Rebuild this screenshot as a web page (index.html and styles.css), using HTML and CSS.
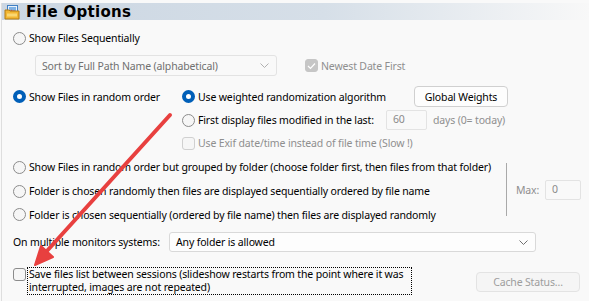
FILE: index.html
```html
<!DOCTYPE html>
<html>
<head>
<meta charset="utf-8">
<link rel="stylesheet" href="styles.css">
</head>
<body>
<div class="page">
  <div class="title">
    <svg class="ticon" width="16" height="16" viewBox="0 0 16 16">
      <rect x="3.5" y="1.5" width="10" height="8" fill="#e9f2fb" stroke="#3f7fc4"/>
      <rect x="5" y="3" width="7" height="5" fill="#7fb2e5"/>
      <path d="M5 8 L7.5 5.5 L9 7 L10 6 L12 8 Z" fill="#d05050"/>
      <path d="M1 6 H5 L6 7 H15 V15 H1 Z" fill="#f2b632" stroke="#b07a14" stroke-width="1"/>
      <rect x="3" y="9.5" width="10" height="3" fill="#f9d772"/>
    </svg>
    <span class="ttext">File Options</span>
  </div>

  <div class="row r-seq">
    <span class="radio"></span><span class="lbl">Show Files Sequentially</span>
  </div>

  <div class="row r-sort">
    <div class="select dis"><span>Sort by Full Path Name (alphabetical)</span><svg class="chev" width="9" height="5" viewBox="0 0 9 5"><path d="M0.5 0.5 L4.5 4.5 L8.5 0.5" fill="none" stroke="#b0b0b0"/></svg></div>
    <div class="newest"><span class="check dchk"><svg width="9" height="8" viewBox="0 0 9 8"><path d="M1 4 L3.5 6.5 L8 1.5" fill="none" stroke="#fff" stroke-width="1.2"/></svg></span><span class="lbl grey">Newest Date First</span></div>
  </div>

  <div class="random">
    <div class="rleft">
      <span class="radio on"></span><span class="lbl">Show Files in random order</span>
    </div>
    <div class="rright">
      <div class="sub s1">
        <span class="radio on"></span><span class="lbl w1">Use weighted randomization algorithm</span>
        <span class="btn gw">Global Weights</span>
      </div>
      <div class="sub s2">
        <span class="radio"></span><span class="lbl w2">First display files modified in the last:</span>
        <span class="input days">60</span><span class="lbl grey dtext">days (0= today)</span>
      </div>
      <div class="sub s3">
        <span class="check dis"></span><span class="lbl grey">Use Exif date/time instead of file time (Slow !)</span>
      </div>
    </div>
  </div>

  <div class="grouped">
    <div class="glist">
      <div class="row g"><span class="radio"></span><span class="lbl">Show Files in random order but grouped by folder (choose folder first, then files from that folder)</span></div>
      <div class="row g"><span class="radio"></span><span class="lbl">Folder is chosen randomly then files are displayed sequentially ordered by file name</span></div>
      <div class="row g"><span class="radio"></span><span class="lbl">Folder is chosen sequentially (ordered by file name) then files are displayed randomly</span></div>
    </div>
    <div class="sep"></div>
    <div class="maxbox"><span class="lbl grey maxl">Max:</span><span class="input maxin">0</span></div>
  </div>

  <div class="row r-mon">
    <span class="lbl monl">On multiple monitors systems:</span>
    <div class="select mon"><span>Any folder is allowed</span><svg class="chev" width="9" height="5" viewBox="0 0 9 5"><path d="M0.5 0.5 L4.5 4.5 L8.5 0.5" fill="none" stroke="#707070"/></svg></div>
  </div>

  <div class="row r-save">
    <span class="check"></span>
    <span class="focus">Save files list between sessions (slideshow restarts from the point where it was<br>interrupted, images are not repeated)</span>
    <span class="btn cache">Cache Status...</span>
  </div>

  <svg class="arrow" width="589" height="301" viewBox="0 0 589 301">
    <line x1="170" y1="112" x2="46" y2="249" stroke="#e8403f" stroke-width="4" stroke-linecap="round"/>
    <polygon points="35,262 41,243 53,254" fill="#e8403f" stroke="#e8403f" stroke-width="2" stroke-linejoin="round"/>
  </svg>
</div>
</body>
</html>
```

FILE: styles.css
```css
html, body { margin: 0; padding: 0; }
body {
  width: 589px; height: 301px; overflow: hidden;
  background: #f9f9f9;
  font-family: "Noto Sans", "Open Sans", sans-serif;
  font-size: 10.5px;
  letter-spacing: -0.15px;
  color: #000;
}
.page {
  position: relative;
  height: 301px;
  border-left: 1px solid #dedede;
  margin-left: 1px;
  box-sizing: border-box;
}
.title {
  margin-top: 3px;
  height: 17px;
  display: flex;
  align-items: center;
  background: linear-gradient(to right, #cbd6e2 0%, #d6dfe8 55%, #f8f8f8 100%);
}
.ticon { margin-left: 2px; margin-right: 6px; }
.ttext {
  font-family: "DejaVu Sans", sans-serif;
  font-weight: bold;
  font-size: 15px;
  letter-spacing: 0.3px;
}
.row { display: flex; align-items: center; }
.lbl { white-space: nowrap; line-height: 14px; }
.grey { color: #8f8f8f; }
.radio {
  width: 11px; height: 11px;
  border: 1px solid #8b8b8b;
  border-radius: 50%;
  background: #f6f6f6;
  flex: none;
  margin-right: 3px;
}
.radio.on {
  width: 5px; height: 5px;
  border: 4px solid #005fb8;
  background: #fff;
}
.check {
  width: 11px; height: 11px;
  border: 1px solid #8b8b8b;
  border-radius: 3px;
  background: #f6f6f6;
  flex: none;
  margin-right: 3px;
  display: flex; align-items: center; justify-content: center;
}
.check.dis { border-color: #d0d0d0; background: #f6f6f6; }
.check.dchk { border-color: #c6c6c6; background: #c6c6c6; }

.r-seq { margin-top: 11px; height: 14px; padding-left: 11px; }
.r-sort { margin-top: 10px; height: 21px; padding-left: 33px; }
.select {
  box-sizing: border-box;
  height: 21px;
  display: flex; align-items: center; justify-content: space-between;
  border: 1px solid #e3e3e3;
  border-radius: 3px;
  padding: 0 7px 0 6px;
}
.select.dis { width: 242px; background: #f9f9f9; color: #707070; }
.newest { display: flex; align-items: center; margin-left: 28px; }

.random { display: flex; margin-top: 10px; }
.rleft { width: 169px; padding-left: 11px; display: flex; align-items: center; height: 21px; }
.rright { display: flex; flex-direction: column; }
.sub { display: flex; align-items: center; }
.s1 { height: 21px; }
.s2 { height: 20px; margin-top: 3px; }
.s3 { height: 18px; margin-top: 4px; }
.w1 { width: 216px; }
.w2 { width: 188px; }
.btn {
  box-sizing: border-box;
  height: 21px;
  display: inline-flex; align-items: center; justify-content: center;
  border: 1px solid #d0d0d0;
  border-radius: 4px;
  background: #fdfdfd;
}
.gw { width: 94px; }
.input {
  box-sizing: border-box;
  height: 20px;
  border: 1px solid #e3e3e3;
  border-radius: 2px;
  background: #f9f9f9;
  color: #8a8a8a;
  padding: 1px 0 0 6px;
  line-height: 15px;
}
.days { width: 41px; }
.dtext { margin-left: 6px; }

.grouped { display: flex; margin-top: 3px; }
.glist { width: 493px; padding-left: 11px; }
.g { height: 24px; }
.g:last-child { height: 23px; }
.sep { width: 1px; background: #a9a9a9; margin: 8px 0 10px 0; }
.maxbox { display: flex; align-items: center; margin-left: 9px; margin-top: 4px; height: 62px; }
.maxl { width: 29px; }
.maxin { width: 36px; }

.r-mon { margin-top: 6px; height: 20px; padding-left: 11px; }
.monl { width: 156px; }
.select.mon { width: 367px; height: 20px; background: #fdfdfd; border-color: #d9d9d9; }

.r-save { margin-top: 15px; height: 28px; align-items: flex-start; padding-left: 11px; }
.r-save .check { margin-top: 1px; margin-right: 1px; }
.focus {
  box-sizing: border-box;
  width: 385px; height: 28px;
  border: 1px dotted #000;
  padding-left: 1px;
  line-height: 13px;
  white-space: nowrap;
  overflow: hidden;
}
.cache { width: 104px; margin-left: 64px; margin-top: 5px; height: 20px; color: #9d9d9d; background: #f5f5f5; border-color: #e3e3e3; }

.arrow { position: absolute; left: -2px; top: 0; pointer-events: none; }
```
